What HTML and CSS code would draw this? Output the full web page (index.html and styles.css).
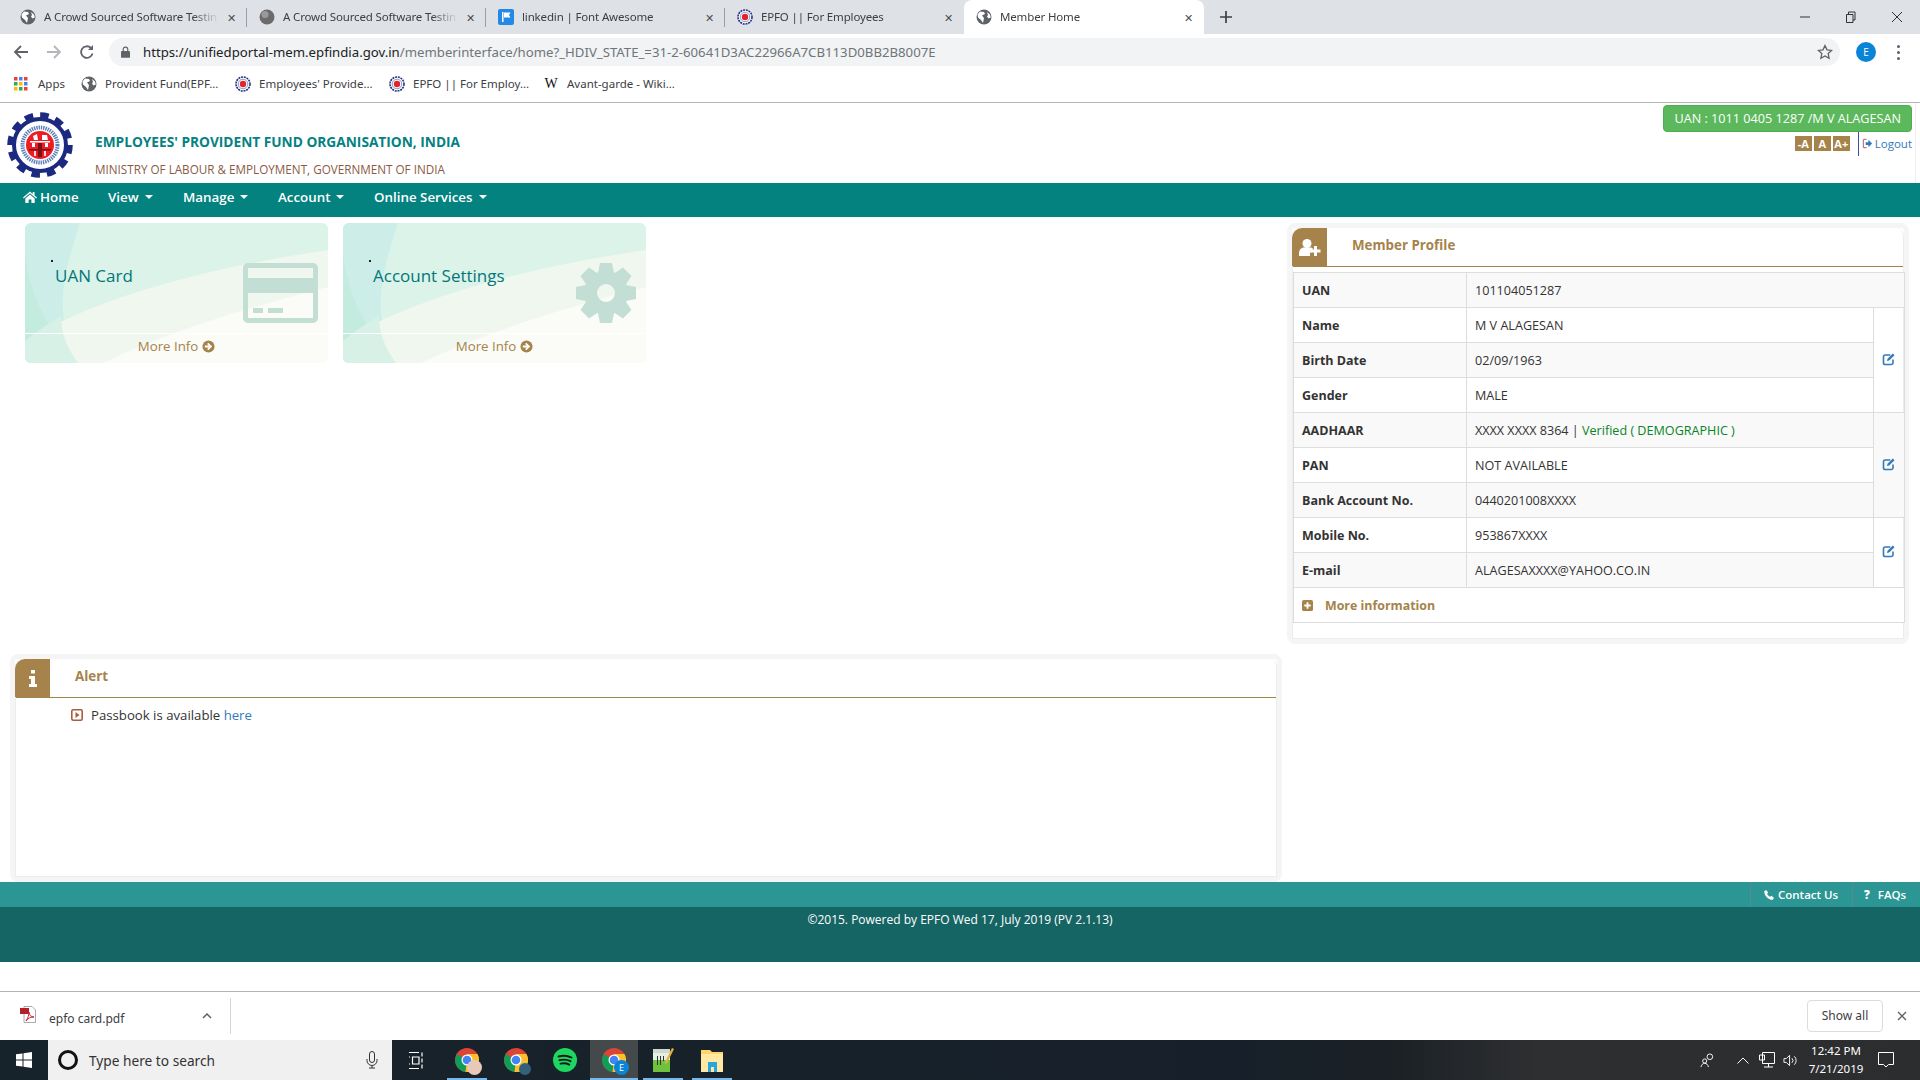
FILE: index.html

```html
<!DOCTYPE html>
<html lang="en">
<head>
<meta charset="UTF-8">
<title>Member Home</title>
<link rel="stylesheet" href="styles.css">
</head>
<body>

<!-- shared icons -->
<svg class="defs" width="0" height="0">
  <symbol id="globe" viewBox="0 0 16 16">
    <circle cx="8" cy="8" r="7.5" fill="#5f6368"/>
    <path d="M4 2.5l4 .5 1 2-3 1.5 2 2.5-1 5-2-3-3-2.5-.5-3zM11 3l3 2.5.8 3-2.3 1-1.5-2 1-1.5z" fill="#fff"/>
  </symbol>
  <symbol id="emblem" viewBox="0 0 16 16">
    <circle cx="8" cy="8" r="7" fill="#fff" stroke="#28307f" stroke-width="1.6" stroke-dasharray="2 .8"/>
    <circle cx="8" cy="8" r="4.8" fill="#fff" stroke="#7f9ccc" stroke-width="1"/>
    <circle cx="8" cy="8" r="3.2" fill="#e5232b"/>
  </symbol>
  <symbol id="edit" viewBox="0 0 14 14">
    <path d="M11 7.5v3.2A1.8 1.8 0 0 1 9.2 12.5H3.3a1.8 1.8 0 0 1-1.8-1.8V4.8A1.8 1.8 0 0 1 3.3 3h5" fill="none" stroke="#337ab7" stroke-width="1.6"/>
    <path d="M5.5 6.8L10.8 1.5l1.7 1.7-5.3 5.3-2.2.5z" fill="#337ab7"/>
  </symbol>
  <symbol id="more" viewBox="0 0 14 14">
    <circle cx="7" cy="7" r="6.5" fill="#a5834a"/>
    <path d="M6.8 3L11 7l-4.2 4-1.3-1.3L7.2 8H3V6h4.2L5.500 4.300z" fill="#fff"/>
  </symbol>
  <symbol id="chrome" viewBox="0 0 24 24">
    <circle cx="12" cy="12" r="12" fill="#db4437"/>
    <path d="M12 12L1.600 6 0 12a12 12 0 0 0 10.500 11.900z" fill="#0f9d58"/>
    <path d="M12 12l-1.500 11.900A12 12 0 0 0 22.400 6H12z" fill="#fbc02d"/>
    <circle cx="12" cy="12" r="5.500" fill="#fff"/>
    <circle cx="12" cy="12" r="4.300" fill="#4285f4"/>
  </symbol>
  <symbol id="cardbg" viewBox="0 0 303 140" preserveAspectRatio="none">
    <path d="M55 0C35 60 30 95 53 140H0V0z" fill="#cdeee8"/>
    <path d="M0 118C70 75 180 45 303 27V140H0z" fill="#f0f7ef"/>
    <path d="M0 30C5 75 25 110 52 140H0z" fill="#c3ecdf"/>
    <path d="M0 118C12 108 24 100 36 93 36 110 42 125 53 140H0z" fill="#d7f1e6"/>
    <path d="M78 140C140 110 220 85 303 64V140z" fill="#fbfbf7"/>
  </symbol>
</svg>

<!-- browser tabs -->
<div class="tabstrip">
  <div class="tab"><svg class="favicon"><use href="#globe"/></svg><span class="tab-title">A Crowd Sourced Software Testin</span><span class="tab-x">✕</span></div>
  <div class="tab"><svg class="favicon" viewBox="0 0 16 16"><circle cx="8" cy="8" r="7.500" fill="#6b6b6b"/><circle cx="6" cy="5.500" r="3.500" fill="#9a9a9a"/></svg><span class="tab-title">A Crowd Sourced Software Testin</span><span class="tab-x">✕</span></div>
  <div class="tab"><svg class="favicon" viewBox="0 0 16 16"><rect width="16" height="16" rx="2" fill="#228ae6"/><path d="M4 3h1.500v10H4zM6 3.500h6.500L11 6l1.500 2.500H6z" fill="#fff"/></svg><span class="tab-title">linkedin | Font Awesome</span><span class="tab-x">✕</span></div>
  <div class="tab tab-last"><svg class="favicon"><use href="#emblem"/></svg><span class="tab-title">EPFO || For Employees</span><span class="tab-x">✕</span></div>
  <div class="tab tab-active"><svg class="favicon"><use href="#globe"/></svg><span class="tab-title">Member Home</span><span class="tab-x">✕</span></div>
  <svg class="tab-new" viewBox="0 0 14 14"><path d="M7 1v12M1 7h12" stroke="#3c4043" stroke-width="1.700"/></svg>
  <div class="win-controls">
    <svg viewBox="0 0 12 12"><path d="M1 6h10" stroke="#333" stroke-width="1"/></svg>
    <svg viewBox="0 0 12 12"><path d="M3.500 3.500V1H10v8H8M1.500 3.500h6.500v8H1.500z" fill="none" stroke="#333" stroke-width="1"/></svg>
    <svg viewBox="0 0 12 12"><path d="M1 1l10 10M11 1L1 11" stroke="#333" stroke-width="1"/></svg>
  </div>
</div>

<!-- browser toolbar -->
<div class="toolbar">
  <svg class="tool-btn" viewBox="0 0 16 16"><path d="M15 8H2M8 2L2 8l6 6" fill="none" stroke="#5f6368" stroke-width="1.800"/></svg>
  <svg class="tool-btn" viewBox="0 0 16 16"><path d="M1 8h13M8 2l6 6-6 6" fill="none" stroke="#b3b6ba" stroke-width="1.800"/></svg>
  <svg class="tool-btn" viewBox="0 0 16 16"><path d="M13.500 9.500A5.800 5.800 0 1 1 12 4" fill="none" stroke="#5f6368" stroke-width="1.800"/><path d="M14 1v5H9z" fill="#5f6368"/></svg>
  <div class="omnibox">
    <svg class="lock" viewBox="0 0 10 13"><path d="M2.500 6V3.500a2.500 2.500 0 0 1 5 0V6" fill="none" stroke="#5f6368" stroke-width="1.300"/><rect y="5.500" width="10" height="7.500" rx="1" fill="#5f6368"/></svg>
    <span class="url"><span class="url-host">https://unifiedportal-mem.epfindia.gov.in</span>/memberinterface/home?_HDIV_STATE_=31-2-60641D3AC22966A7CB113D0BB2B8007E</span>
    <svg class="star" viewBox="0 0 16 16"><path d="M8 1.500l2 4.300 4.600.6-3.400 3.200.9 4.700L8 12l-4.100 2.300.9-4.700L1.400 6.400 6 5.800z" fill="none" stroke="#5f6368" stroke-width="1.300"/></svg>
  </div>
  <div class="avatar">E</div>
  <div class="kebab"><i></i><i></i><i></i></div>
</div>

<!-- bookmarks -->
<div class="bookmarks">
  <div class="bm bm-apps">
    <svg class="apps-icon" viewBox="0 0 14 14">
      <rect width="3.500" height="3.500" fill="#ea4335"/><rect x="5" width="3.500" height="3.500" fill="#4285f4"/><rect x="10" width="3.500" height="3.500" fill="#ea4335"/>
      <rect y="5" width="3.500" height="3.500" fill="#34a853"/><rect x="5" y="5" width="3.500" height="3.500" fill="#fbbc05"/><rect x="10" y="5" width="3.500" height="3.500" fill="#4285f4"/>
      <rect y="10" width="3.500" height="3.500" fill="#fbbc05"/><rect x="5" y="10" width="3.500" height="3.500" fill="#34a853"/><rect x="10" y="10" width="3.500" height="3.500" fill="#ea4335"/>
    </svg>Apps</div>
  <div class="bm bm-w1"><svg class="favicon"><use href="#globe"/></svg>Provident Fund(EPF...</div>
  <div class="bm bm-w2"><svg class="favicon"><use href="#emblem"/></svg>Employees' Provide...</div>
  <div class="bm bm-w2"><svg class="favicon"><use href="#emblem"/></svg>EPFO || For Employ...</div>
  <div class="bm"><span class="wiki">W</span>Avant-garde - Wiki...</div>
</div>

<!-- site header -->
<header class="site-head">
  <svg class="logo" viewBox="0 0 66 66">
    <circle cx="33" cy="33" r="29.500" fill="none" stroke="#1b2a80" stroke-width="6.500" stroke-dasharray="8.500 6.940"/>
    <circle cx="33" cy="33" r="26" fill="#fff" stroke="#1b2a80" stroke-width="4"/>
    <circle cx="33" cy="33" r="17.500" fill="none" stroke="#5d7fb8" stroke-width="4" stroke-dasharray="1.400 .9"/>
    <circle cx="33" cy="33" r="14" fill="#ee1c25"/>
    <path d="M23 29h20v1.500H23zM25 31h3v4h-3zM38 31h3v4h-3zM26 24l4-2 1 6h-4zM35 23h5l1 5h-6z" fill="#fff"/>
    <path d="M31 31h4v14h-4zM22 37h22v1.500H22z" fill="#7b1017"/>
    <path d="M27 39h2v5h-2zM37 39h2v5h-2z" fill="#fbd5d5"/>
  </svg>
  <div class="brand">
    <div class="brand-title">EMPLOYEES' PROVIDENT FUND ORGANISATION, INDIA</div>
    <div class="brand-sub">MINISTRY OF LABOUR &amp; EMPLOYMENT, GOVERNMENT OF INDIA</div>
  </div>
  <div class="head-right">
    <div class="uan-btn">UAN : 1011 0405 1287 /M V ALAGESAN</div>
    <div class="head-tools">
      <span class="font-btn font-btn-a">-A</span><span class="font-btn">A</span><span class="font-btn font-btn-c">A+</span>
      <a class="logout">
        <svg viewBox="0 0 12 12"><path d="M5 1.500H2.500a1 1 0 0 0-1 1v7a1 1 0 0 0 1 1H5" fill="none" stroke="#b9788c" stroke-width="1.300"/><path d="M4 4.500h3V2l4 4-4 4V7.500H4z" fill="#337ab7"/></svg>Logout</a>
    </div>
  </div>
</header>

<!-- main nav -->
<nav class="main-nav">
  <a class="nav-home"><svg viewBox="0 0 14 12"><path d="M7 .5L0 6.500l.8 1L7 2.300l6.200 5.200.8-1-2.500-2.100V1h-1.800v1.900zM2.300 7.500V12h3.300V8.500h2.800V12h3.300V7.500L7 3.500z" fill="#fff"/></svg>Home</a>
  <a class="nav-item nav-view">View<i class="caret"></i></a>
  <a class="nav-item nav-manage">Manage<i class="caret"></i></a>
  <a class="nav-item nav-account">Account<i class="caret"></i></a>
  <a class="nav-item">Online Services<i class="caret"></i></a>
</nav>

<main class="content">
  <div class="left-col">
    <div class="cards">
      <div class="card">
        <svg class="card-bg"><use href="#cardbg"/></svg>
        <div class="card-body">
          <span class="card-dot"></span>
          <div class="card-title">UAN Card</div>
          <svg class="card-icon" viewBox="0 0 75 60"><path fill-rule="evenodd" d="M5 0h65a5 5 0 0 1 5 5v50a5 5 0 0 1-5 5H5a5 5 0 0 1-5-5V5a5 5 0 0 1 5-5zM5 5v10h65V5zM5 30v25h65V30zM10 45h10v5H10zM25 45h15v5H25z" fill="#c2ded5"/></svg>
        </div>
        <div class="card-foot">More Info <svg class="more-icon"><use href="#more"/></svg></div>
      </div>
      <div class="card">
        <svg class="card-bg"><use href="#cardbg"/></svg>
        <div class="card-body">
          <span class="card-dot"></span>
          <div class="card-title">Account Settings</div>
          <svg class="card-icon card-gear" viewBox="0 0 62 60">
            <g transform="translate(31 30)" fill="#c2ded5">
              <circle r="15.500" fill="none" stroke="#c2ded5" stroke-width="13"/>
              <path d="M-6-30H6L8-20H-8z"/>
              <path d="M-6-30H6L8-20H-8z" transform="rotate(45)"/>
              <path d="M-6-30H6L8-20H-8z" transform="rotate(90)"/>
              <path d="M-6-30H6L8-20H-8z" transform="rotate(135)"/>
              <path d="M-6-30H6L8-20H-8z" transform="rotate(180)"/>
              <path d="M-6-30H6L8-20H-8z" transform="rotate(225)"/>
              <path d="M-6-30H6L8-20H-8z" transform="rotate(270)"/>
              <path d="M-6-30H6L8-20H-8z" transform="rotate(315)"/>
            </g>
          </svg>
        </div>
        <div class="card-foot">More Info <svg class="more-icon"><use href="#more"/></svg></div>
      </div>
    </div>

    <section class="panel alert-panel">
      <div class="panel-inner">
        <div class="panel-head alert-head">
          <span class="panel-badge"><svg viewBox="0 0 8 17"><path d="M2 0h4v3.500H2zM0 6h6v8h2v3H0v-3h2V9H0z" fill="#fff"/></svg></span>
          <h3 class="panel-title alert-title">Alert</h3>
        </div>
        <div class="alert-row">
          <svg class="alert-icon" viewBox="0 0 12 12"><rect x=".8" y=".8" width="10.400" height="10.400" rx="1.500" fill="none" stroke="#a85c3c" stroke-width="1.600"/><path d="M4.500 3l4 3-4 3z" fill="#a85c3c"/></svg>
          Passbook is available&nbsp;<a class="link">here</a>
        </div>
      </div>
    </section>
  </div>

  <section class="panel profile-panel">
    <div class="panel-inner">
      <div class="panel-head">
        <span class="panel-badge"><svg class="badge-user" viewBox="0 0 22 17"><circle cx="8" cy="4.500" r="4.500" fill="#fff"/><path d="M0 17v-3c0-3 2-5 4-5.500h8c1 .3 2 1 2.600 2H13v3h-2v3.500z" fill="#fff"/><path d="M15 7h3v3.500h3.500v3H18V17h-3v-3.500h-3.500v-3H15z" fill="#fff"/></svg></span>
        <h3 class="panel-title">Member Profile</h3>
      </div>
      <table class="profile-table">
        <colgroup><col class="col-label"><col class="col-value"><col class="col-edit"></colgroup>
        <tbody>
          <tr><th>UAN</th><td colspan="2">101104051287</td></tr>
          <tr><th>Name</th><td>M V ALAGESAN</td><td class="edit-cell" rowspan="3"><svg class="edit-icon"><use href="#edit"/></svg></td></tr>
          <tr><th>Birth Date</th><td>02/09/1963</td></tr>
          <tr><th>Gender</th><td>MALE</td></tr>
          <tr><th>AADHAAR</th><td>XXXX XXXX 8364 | <span class="verified">Verified ( DEMOGRAPHIC )</span></td><td class="edit-cell" rowspan="3"><svg class="edit-icon"><use href="#edit"/></svg></td></tr>
          <tr><th>PAN</th><td>NOT AVAILABLE</td></tr>
          <tr><th>Bank Account No.</th><td>0440201008XXXX</td></tr>
          <tr><th>Mobile No.</th><td>953867XXXX</td><td class="edit-cell" rowspan="2"><svg class="edit-icon"><use href="#edit"/></svg></td></tr>
          <tr><th>E-mail</th><td>ALAGESAXXXX@YAHOO.CO.IN</td></tr>
          <tr><td class="more-cell" colspan="3"><svg class="plus-icon" viewBox="0 0 12 12"><rect width="12" height="12" rx="2" fill="#a5834a"/><path d="M5 2.500h2V5h2.500v2H7v2.500H5V7H2.500V5H5z" fill="#fff"/></svg>More information</td></tr>
        </tbody>
      </table>
    </div>
  </section>
</main>

<footer>
  <div class="foot-top">
    <a class="foot-link foot-contact"><svg viewBox="0 0 12 12"><path d="M2.500 0L5 3 3.800 4.600c.6 1.600 2 3 3.600 3.600L9 7l3 2.500-1.500 2.300C5 12 0 6.500.300 1.500z" fill="#fff"/></svg>Contact Us</a>
    <a class="foot-link foot-faq"><b class="faq-mark">?</b>FAQs</a>
  </div>
  <div class="foot-main">©2015. Powered by EPFO Wed 17, July 2019 (PV 2.1.13)</div>
</footer>

<!-- download shelf -->
<div class="shelf">
  <svg class="pdf-icon" viewBox="0 0 16 17"><path d="M4 .500h8l3.500 3.500v12.500H4z" fill="#fff" stroke="#a9a9a9"/><path d="M0 2h9v6H0z" fill="#b3202c"/><path d="M6 15c2-3 3-6 3-9 0 3 2 5 5 5-3 0-6 1-8 4z" fill="none" stroke="#c8202f" stroke-width="1"/></svg>
  <span class="shelf-name">epfo card.pdf</span>
  <svg class="shelf-chev" viewBox="0 0 10 6"><path d="M1 5l4-4 4 4" fill="none" stroke="#5f6368" stroke-width="1.500"/></svg>
  <span class="shelf-sep"></span>
  <span class="shelf-show">Show all</span>
  <svg class="shelf-x" viewBox="0 0 10 10"><path d="M1 1l8 8M9 1L1 9" stroke="#5f6368" stroke-width="1.400"/></svg>
</div>

<!-- windows taskbar -->
<div class="taskbar">
  <div class="start"><svg viewBox="0 0 16 16"><path d="M0 2.300L6.500 1.400V7.500H0zM7.500 1.300L16 0V7.500H7.500zM0 8.500H6.500V14.600L0 13.700zM7.500 8.500H16V16L7.500 14.700z" fill="#fff"/></svg></div>
  <div class="search-box">
    <span class="cortana"></span>
    <span class="search-text">Type here to search</span>
    <svg class="mic" viewBox="0 0 12 18"><rect x="3.500" y=".5" width="5" height="11" rx="2.500" fill="none" stroke="#333"/><path d="M1 8v1.500a5 5 0 0 0 10 0V8M6 14.500V17M3 17h6" fill="none" stroke="#333"/></svg>
  </div>
  <svg class="task-view" viewBox="0 0 16 17"><path d="M0 .5h10M0 16.500h10M3.500 5h6.500v7H3.500zM13 .5v4M13 6.500v4M13 12.500v4M0 5h1M0 12h1" fill="none" stroke="#fff" stroke-width="1.200"/></svg>
  <div class="task-app task-run">
    <svg class="task-icon"><use href="#chrome"/></svg>
    <span class="task-over over-a"></span>
  </div>
  <div class="task-app">
    <svg class="task-icon"><use href="#chrome"/></svg>
    <span class="task-over over-b"></span>
  </div>
  <div class="task-app">
    <svg class="task-icon" viewBox="0 0 24 24"><circle cx="12" cy="12" r="12" fill="#1ed760"/><path d="M5.500 8.500c4.500-1.300 9-1 13 1M6.500 12.200c3.800-1 7.500-.8 11 1M7.500 15.700c3-.8 6-.6 8.800.9" fill="none" stroke="#12191c" stroke-width="1.900" stroke-linecap="round"/></svg>
  </div>
  <div class="task-app task-active task-run-full">
    <svg class="task-icon"><use href="#chrome"/></svg>
    <span class="task-over over-e">E</span>
  </div>
  <div class="task-app task-run">
    <svg class="task-icon" viewBox="0 0 24 24"><path d="M2 1h17v23H2z" fill="#e6efe3"/><path d="M2 1h17v4H2z" fill="#cfd8cf"/><path d="M2 12h17v12H2z" fill="#6ec23e"/><path d="M6 8h1v9H6zM9 8h1v9H9zM12 8h1v5h-1z" fill="#333"/><path d="M21 0l2 1-7 14-2 1 0-2z" fill="#e8b13a"/></svg>
  </div>
  <div class="task-app task-run">
    <svg class="task-icon" viewBox="0 0 24 24"><path d="M1 2h9l2 2h11v20H1z" fill="#ffd66a"/><path d="M1 6h22v18H1z" fill="#ffe9a3"/><path d="M8 14h9v10h-3v-5h-3v5H8z" fill="#2aa4dd"/></svg>
  </div>
  <div class="tray">
    <svg class="tray-people" viewBox="0 0 16 16"><circle cx="10.500" cy="4" r="3" fill="none" stroke="#fff"/><circle cx="5" cy="8.500" r="2.200" fill="none" stroke="#fff"/><path d="M1 15c.5-2.500 2-4 4-4s3.500 1.500 4 4" fill="none" stroke="#fff"/></svg>
    <svg class="tray-up" viewBox="0 0 12 7"><path d="M.5 6.500L6 1l5.500 5.500" fill="none" stroke="#fff"/></svg>
    <svg class="tray-net" viewBox="0 0 16 16"><path d="M3.500 .5h12v11h-12zM9.500 11.500V15M5 15h9M.5 3h5v5h-5z" fill="#2c2e30" stroke="#fff"/></svg>
    <svg class="tray-vol" viewBox="0 0 16 16"><path d="M1 6h2.500L7 2.500v11L3.500 10H1zM9.500 5.500a3.500 3.500 0 0 1 0 5M12 3.500a6 6 0 0 1 0 9" fill="none" stroke="#fff"/></svg>
    <div class="clock"><div>12:42 PM</div><div>7/21/2019</div></div>
    <svg class="tray-note" viewBox="0 0 16 16"><path d="M.5 .5h15v12h-5L8 15l-2.500-2.500h-5z" fill="none" stroke="#fff"/></svg>
  </div>
</div>

</body>
</html>
```

FILE: styles.css

```css
* {
  box-sizing: border-box;
}
html, body {
  margin: 0;
  padding: 0;
  height: 1080px;
  overflow: hidden;
}
body {
  font-family: "Open Sans", sans-serif;
  font-size: 13px;
  color: #333;
  background-color: #fff;
}
.defs {
  display: block;
  height: 0;
}

/* browser chrome */
.tabstrip {
  display: flex;
  align-items: center;
  height: 34px;
  padding-left: 8px;
  background-color: #dee1e6;
  font-family: "Noto Sans", sans-serif;
  font-size: 11.5px;
  letter-spacing: -0.15px;
  color: #3c4043;
}
.tab {
  display: flex;
  align-items: center;
  width: 239px;
  height: 34px;
  padding: 0 10px 0 12px;
  position: relative;
}
.tab::after {
  content: "";
  position: absolute;
  right: 0;
  top: 8px;
  height: 19px;
  border-right: 1px solid #9aa0a6;
}
.tab-last::after {
  display: none;
}
.tab-active {
  width: 240px;
  padding-left: 12px;
  background-color: #fff;
  border-radius: 8px 8px 0 0;
}
.tab-active::after {
  display: none;
}
.favicon {
  flex: none;
  width: 16px;
  height: 16px;
  margin-right: 8px;
}
.tab-title {
  flex: 1;
  margin-top: -1px;
  overflow: hidden;
  padding-right: 2px;
  white-space: nowrap;
  -webkit-mask-image: linear-gradient(to right, #000 85%, transparent 100%);
}
.tab-x {
  flex: none;
  width: 12px;
  margin-left: 6px;
  font-size: 11px;
  text-align: center;
  color: #4a4d51;
}
.tab-new {
  width: 14px;
  height: 14px;
  margin-left: 15px;
}
.win-controls {
  display: flex;
  gap: 34px;
  margin-left: auto;
  padding-right: 17px;
}
.win-controls svg {
  width: 12px;
  height: 12px;
}
.toolbar {
  display: flex;
  align-items: center;
  height: 34px;
  padding: 2px 0 0 13px;
  background-color: #fff;
}
.tool-btn {
  width: 16px;
  height: 16px;
  margin-right: 17px;
}
.omnibox {
  display: flex;
  align-items: center;
  width: 1731px;
  height: 28px;
  margin-left: -3px;
  padding: 0 6px 0 12px;
  background-color: #f1f3f4;
  border-radius: 14px;
}
.lock {
  width: 9px;
  height: 12px;
  margin-right: 13px;
}
.url {
  font-family: "Noto Sans", sans-serif;
  font-size: 13.2px;
  color: #70757a;
  white-space: nowrap;
}
.url-host {
  color: #202124;
}
.star {
  width: 16px;
  height: 16px;
  margin-left: auto;
  margin-right: 1px;
}
.avatar {
  width: 20px;
  height: 20px;
  margin-left: 16px;
  border-radius: 50%;
  background-color: #0a84d6;
  color: #fff;
  font-size: 10px;
  line-height: 20px;
  text-align: center;
}
.kebab {
  display: flex;
  flex-direction: column;
  gap: 3px;
  margin-left: 21px;
}
.kebab i {
  width: 3px;
  height: 3px;
  border-radius: 50%;
  background-color: #5f6368;
}
.bookmarks {
  display: flex;
  align-items: center;
  height: 35px;
  padding: 0 0 3px 14px;
  border-bottom: 1px solid #b5b5b5;
  background-color: #fff;
  font-family: "Noto Sans", sans-serif;
  font-size: 11.5px;
  color: #3c4043;
}
.bm {
  display: flex;
  align-items: center;
}
.bm .favicon {
  margin-right: 8px;
}
.bm-apps {
  width: 67px;
}
.bm-w1 {
  width: 154px;
}
.bm-w2 {
  width: 154px;
}
.apps-icon {
  width: 14px;
  height: 14px;
  margin-right: 10px;
}
.wiki {
  width: 16px;
  margin-right: 8px;
  font-family: "Liberation Serif", serif;
  font-size: 14px;
  text-align: center;
  color: #111;
}

/* site header */
.site-head {
  display: flex;
  height: 80px;
  margin-right: 4px;
  padding-left: 7px;
  border-right: 1px solid #eee;
}
.logo {
  flex: none;
  width: 66px;
  height: 66px;
  margin-top: 9px;
}
.brand {
  margin-left: 22px;
  padding-top: 29px;
}
.brand-title {
  font-size: 13.7px;
  font-weight: 700;
  line-height: 20px;
  color: #04827f;
}
.brand-sub {
  margin-top: 8px;
  font-size: 11.7px;
  line-height: 18px;
  color: #8a5a44;
}
.head-right {
  display: flex;
  flex-direction: column;
  align-items: flex-end;
  margin-left: auto;
  padding: 2px 3px 0 0;
}
.uan-btn {
  height: 27px;
  padding: 0 10px;
  border: 1px solid #4cae4c;
  border-radius: 4px;
  background-color: #5cb85c;
  color: #fff;
  font-size: 12.65px;
  line-height: 25px;
}
.head-tools {
  display: flex;
  align-items: flex-start;
}
.font-btn {
  width: 17px;
  height: 15px;
  margin-top: 4px;
  margin-right: 2px;
  background-color: #a5834a;
  color: #fff;
  font-size: 11px;
  font-weight: 700;
  line-height: 15px;
  text-align: center;
}
.logout {
  display: flex;
  align-items: center;
  height: 24px;
  margin-left: 6px;
  padding: 0 0 2px 3px;
  border-left: 1px solid #3a4fa0;
  color: #337ab7;
  font-size: 11.5px;
}
.logout svg {
  width: 11px;
  height: 11px;
  margin-right: 2px;
}

/* nav */
.main-nav {
  display: flex;
  align-items: center;
  height: 34px;
  padding-left: 23px;
  background-color: #04827f;
  color: #fff;
  font-size: 13.35px;
  font-weight: 600;
}
.main-nav a {
  display: flex;
  align-items: center;
  margin-top: -6px;
}
.nav-home {
  width: 85px;
}
.nav-home svg {
  width: 14px;
  height: 12px;
  margin-right: 3px;
}
.nav-view {
  width: 75px;
}
.nav-manage {
  width: 95px;
}
.nav-account {
  width: 96px;
}
.caret {
  margin-left: 6px;
  border-top: 4px solid #fff;
  border-left: 4px solid transparent;
  border-right: 4px solid transparent;
}

/* content */
.content {
  display: grid;
  grid-template-columns: 1271px 622px;
  column-gap: 6px;
  height: 665px;
  padding: 6px 0 0 10px;
}
.left-col {
  display: flex;
  flex-direction: column;
  justify-content: space-between;
}
.cards {
  display: flex;
  gap: 15px;
  padding-left: 15px;
}
.card {
  display: flex;
  flex-direction: column;
  width: 303px;
  height: 140px;
  position: relative;
  overflow: hidden;
  border-radius: 6px;
  background-color: #dbf3e8;
}
.card-bg {
  position: absolute;
  left: 0;
  top: 0;
  width: 100%;
  height: 100%;
}
.card-body {
  flex: 1;
  display: flex;
  justify-content: space-between;
  position: relative;
  padding: 40px 10px 0 30px;
}
.card-dot {
  position: absolute;
  left: 26px;
  top: 37px;
  width: 2px;
  height: 2px;
  background-color: #222;
}
.card-title {
  font-size: 17px;
  line-height: 26px;
  color: #04767a;
}
.card-icon {
  width: 75px;
  height: 60px;
}
.card-gear {
  width: 62px;
  margin-right: -1px;
}
.card-foot {
  display: flex;
  align-items: center;
  justify-content: center;
  height: 30px;
  padding-bottom: 5px;
  position: relative;
  border-top: 1px solid #fff;
  color: #a5834a;
  font-size: 13.3px;
}
.more-icon {
  width: 13px;
  height: 13px;
  margin-left: 4px;
}
.panel {
  border: 5px solid #f5f5f5;
  border-radius: 8px;
  background-color: #fff;
}
.panel-inner {
  height: 100%;
  border: 1px solid #ececec;
  border-top: none;
  border-radius: 8px 8px 0 0;
}
.panel-head {
  display: flex;
  align-items: center;
  height: 39px;
  border-bottom: 1px solid #a5834a;
}
.panel-badge {
  display: flex;
  align-items: center;
  justify-content: center;
  width: 35px;
  height: 38px;
  margin-left: -1px;
  border-radius: 10px 0 0 0;
  background-color: #a5834a;
}
.panel-badge svg {
  width: 8px;
  height: 17px;
}
.panel-badge .badge-user {
  width: 22px;
  height: 17px;
}
.panel-title {
  margin: 0 0 4px 25px;
  font-size: 13.35px;
  font-weight: 700;
  color: #a5834a;
}
.alert-panel {
  width: 1272px;
  height: 228px;
}
.alert-title {
  margin-left: 25px;
}
.alert-row {
  display: flex;
  align-items: center;
  height: 34px;
  padding-left: 55px;
  color: #333;
  font-size: 13.2px;
}
.alert-icon {
  width: 12px;
  height: 12px;
  margin-right: 8px;
}
.link {
  color: #337ab7;
}
.profile-panel {
  height: 421px;
}
.profile-table {
  width: 612px;
  margin: 5px 0 0 0;
  table-layout: fixed;
  border-collapse: collapse;
  font-size: 12.6px;
}
.col-label {
  width: 173px;
}
.col-edit {
  width: 31px;
}
.profile-table th,
.profile-table td {
  height: 35px;
  padding: 0 8px;
  border: 1px solid #ddd;
  text-align: left;
}
.profile-table th {
  font-weight: 700;
  font-size: 12.5px;
}
.profile-table tr:nth-child(odd) {
  background-color: #f9f9f9;
}
.profile-table tr:last-child {
  background-color: #fff;
}
.profile-table .edit-cell {
  padding: 0;
  text-align: center;
}
.edit-icon {
  display: block;
  width: 14px;
  height: 14px;
  margin: -3px auto 0;
}
.verified {
  color: #08841f;
}
.profile-table .more-cell {
  color: #a5834a;
  font-size: 12.4px;
  font-weight: 700;
}
.plus-icon {
  width: 11px;
  height: 11px;
  margin-right: 12px;
  vertical-align: -1px;
}

/* footer */
.foot-top {
  display: flex;
  justify-content: flex-end;
  height: 25px;
  background-color: #2b9694;
  color: #fff;
  font-size: 11.5px;
  font-weight: 600;
}
.foot-link {
  display: flex;
  align-items: center;
  border-left: 1px solid #5a8b8c;
}
.foot-contact {
  width: 102px;
  padding-left: 13px;
}
.foot-contact svg {
  width: 10px;
  height: 10px;
  margin-right: 4px;
}
.foot-faq {
  width: 68px;
  padding-left: 11px;
}
.faq-mark {
  margin-right: 8px;
}
.foot-main {
  height: 55px;
  padding-top: 4px;
  background-color: #166565;
  color: #fff;
  font-size: 12px;
  line-height: 18px;
  text-align: center;
}

/* download shelf */
.shelf {
  display: flex;
  align-items: center;
  height: 49px;
  margin-top: 29px;
  padding-left: 20px;
  border-top: 1px solid #b5b5b5;
  font-family: "Noto Sans", sans-serif;
  font-size: 12px;
  color: #3c4043;
}
.pdf-icon {
  width: 16px;
  height: 17px;
  margin: -4px 13px 0 0;
}
.shelf-name {
  width: 153px;
  padding-top: 4px;
}
.shelf-chev {
  width: 10px;
  height: 6px;
}
.shelf-sep {
  height: 36px;
  margin-left: 18px;
  border-left: 1px solid #d5d5d5;
}
.shelf-show {
  width: 76px;
  height: 32px;
  margin-left: auto;
  border: 1px solid #dadce0;
  border-radius: 4px;
  font-size: 12px;
  line-height: 30px;
  text-align: center;
}
.shelf-x {
  width: 10px;
  height: 10px;
  margin: 0 13px 0 14px;
}

/* taskbar */
.taskbar {
  display: flex;
  align-items: center;
  height: 40px;
  background: linear-gradient(to right, #17232b 0, #17202a 65%, #1a2025 72%, #2e2f31 80%, #2c2d2f 100%);
  color: #fff;
}
.start {
  display: flex;
  align-items: center;
  justify-content: center;
  width: 48px;
  height: 40px;
}
.start svg {
  width: 16px;
  height: 16px;
}
.search-box {
  display: flex;
  align-items: center;
  width: 344px;
  height: 40px;
  padding-left: 10px;
  background-color: #f0f0f0;
  color: #333;
  font-family: "Noto Sans", sans-serif;
  font-size: 13.7px;
}
.cortana {
  width: 20px;
  height: 20px;
  margin-right: 11px;
  border: 3px solid #111;
  border-radius: 50%;
}
.mic {
  width: 12px;
  height: 18px;
  margin-left: auto;
  margin-right: 14px;
}
.task-view {
  width: 16px;
  height: 17px;
  margin: 0 18px 0 17px;
}
.task-app {
  display: flex;
  align-items: center;
  justify-content: center;
  width: 48px;
  height: 40px;
  position: relative;
  margin-right: 1px;
}
.task-icon {
  width: 24px;
  height: 24px;
}
.task-run::after,
.task-run-full::after {
  content: "";
  position: absolute;
  left: 4px;
  right: 4px;
  bottom: 0;
  height: 2px;
  background-color: #76b9ed;
}
.task-run-full::after {
  left: 0;
  right: 0;
}
.task-active {
  background-color: #44494b;
}
.task-over {
  position: absolute;
  right: 9px;
  bottom: 5px;
  width: 15px;
  height: 15px;
  border-radius: 50%;
}
.over-a {
  background-color: #e8c8b8;
}
.over-b {
  width: 12px;
  height: 12px;
  background-color: #33607c;
}
.over-e {
  background-color: #0a84d6;
  color: #fff;
  font-size: 9px;
  line-height: 15px;
  text-align: center;
}
.tray {
  display: flex;
  align-items: center;
  margin-left: auto;
  padding-right: 26px;
}
.tray-people {
  width: 15px;
  height: 15px;
  margin-right: 22px;
}
.tray-up {
  width: 12px;
  height: 7px;
  margin-right: 10px;
}
.tray-net {
  width: 16px;
  height: 16px;
  margin-right: 8px;
}
.tray-vol {
  width: 15px;
  height: 15px;
  margin-right: 10px;
}
.clock {
  width: 56px;
  font-family: "Noto Sans", sans-serif;
  font-size: 11.5px;
  line-height: 18px;
  text-align: center;
}
.tray-note {
  width: 16px;
  height: 16px;
  margin-left: 14px;
}
```
